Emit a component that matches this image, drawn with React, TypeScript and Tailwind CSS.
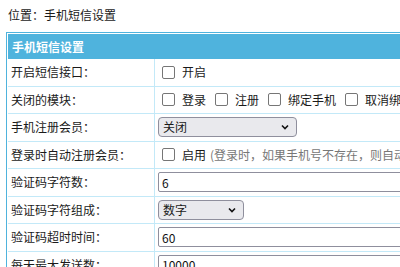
import React from 'react'

const font = { fontFamily: '"Noto Sans CJK SC", "Noto Sans", sans-serif' }

function Checkbox() {
  return (
    <span className="inline-block h-[13px] w-[13px] shrink-0 rounded-[2px] border border-[#767676] bg-white" />
  )
}

function CheckItem({ label, children }: { label: string; children?: React.ReactNode }) {
  return (
    <label className="flex items-center whitespace-nowrap">
      <Checkbox />
      <span className="ml-[7px]">{label}</span>
      {children}
    </label>
  )
}

function Select({ value, width }: { value: string; width: string }) {
  return (
    <div
      className={`flex h-[20px] items-center justify-between rounded-[4px] border border-[#8f8f9d] bg-[#e9e9ed] pl-[4px] pr-[7px] ${width}`}
    >
      <span>{value}</span>
      <svg width="8" height="6" viewBox="0 0 8 6" aria-hidden="true">
        <path d="M1 1.5 L4 4.5 L7 1.5" fill="none" stroke="#111" strokeWidth="1.6" />
      </svg>
    </div>
  )
}

function TextInput({ value }: { value: string }) {
  return (
    <input
      readOnly
      value={value}
      className="h-[20px] w-[320px] rounded-[2px] border border-[#8f8f9d] bg-white px-[3px] text-[12px] text-[#111] outline-none"
    />
  )
}

function Row({ label, children }: { label: string; children: React.ReactNode }) {
  return (
    <div className="flex h-[27.5px] border-b border-[#c3e9f8]">
      <div className="flex w-[147px] shrink-0 items-center border-r border-[#c3e9f8] pl-[3px]">
        {label}
      </div>
      <div className="flex flex-1 items-center pl-[3px]">{children}</div>
    </div>
  )
}

export default function App() {
  return (
    <div className="h-screen w-screen overflow-hidden bg-white text-[12px] text-[#1a1a1a]" style={font}>
      <div className="pl-[8px] pt-[6px] leading-[18px]">位置：手机短信设置</div>
      <div className="ml-[6px] mt-[8px] w-[700px] border border-[#4fb3dd] p-[1px] pb-0">
        <div className="flex h-[25px] items-center bg-[#4fb3dd] pl-[4px] font-bold text-white">
          手机短信设置
        </div>
        <Row label="开启短信接口：">
          <div className="ml-[4px] flex">
            <CheckItem label="开启" />
          </div>
        </Row>
        <Row label="关闭的模块：">
          <div className="ml-[4px] flex gap-[9px]">
            <CheckItem label="登录" />
            <CheckItem label="注册" />
            <CheckItem label="绑定手机" />
            <CheckItem label="取消绑定" />
          </div>
        </Row>
        <Row label="手机注册会员：">
          <Select value="关闭" width="w-[139px]" />
        </Row>
        <Row label="登录时自动注册会员：">
          <div className="ml-[4px] flex">
            <CheckItem label="启用">
              <span className="ml-[4px] text-[#777]">
                (登录时，如果手机号不存在，则自动注册会员)
              </span>
            </CheckItem>
          </div>
        </Row>
        <Row label="验证码字符数：">
          <TextInput value="6" />
        </Row>
        <Row label="验证码字符组成：">
          <Select value="数字" width="w-[86px]" />
        </Row>
        <Row label="验证码超时时间：">
          <TextInput value="60" />
        </Row>
        <Row label="每天最大发送数：">
          <TextInput value="10000" />
        </Row>
      </div>
    </div>
  )
}
